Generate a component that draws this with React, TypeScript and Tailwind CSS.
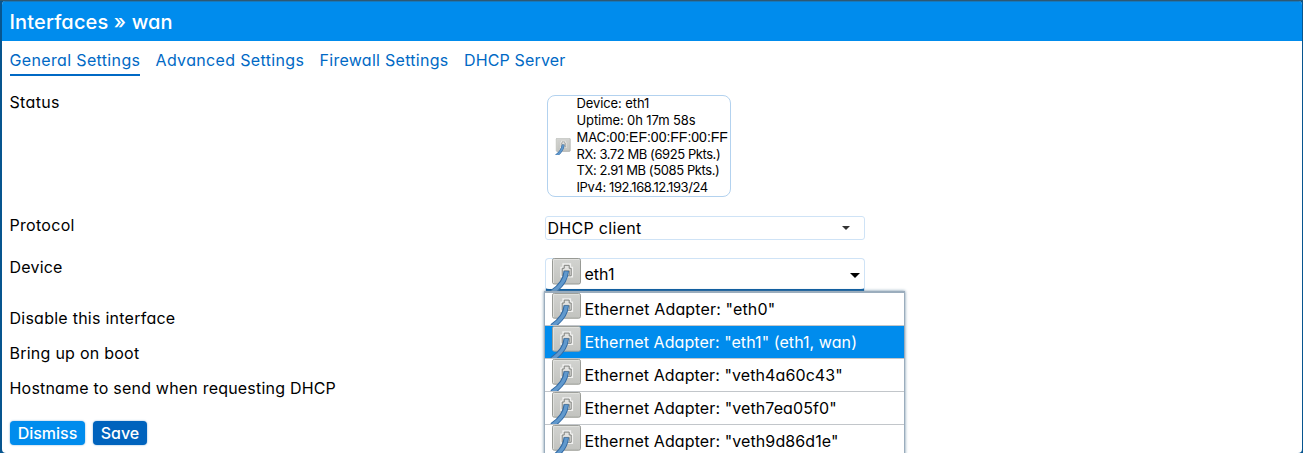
import React from "react";

function PortIcon({ className }: { className: string }) {
  return (
    <svg viewBox="0 0 32 33" className={className} preserveAspectRatio="none">
      <defs>
        <linearGradient id="plate" x1="0" y1="0" x2="0" y2="1">
          <stop offset="0" stopColor="#d2d3d0" />
          <stop offset="1" stopColor="#c2c3bf" />
        </linearGradient>
      </defs>
      <rect x="2.5" y="0.5" width="28" height="25.5" rx="1.8" fill="url(#plate)" stroke="#989a95" />
      <path d="M3.5 25V1.5H29.5" fill="none" stroke="#e4e5e2" strokeWidth="0.8" />
      <path d="M11.3 18.5V9.8h2V6.3h6.8v3.5h2v8.7z" fill="#e9e9e7" stroke="#f0f0ef" strokeWidth="2" />
      <path d="M12.2 17.8V10.3h2V7.3h5v3h2v7.5z" fill="#e3e3e1" stroke="#7d7f7b" strokeWidth="1" />
      <path d="M14.3 17v-4.2h5V17" fill="none" stroke="#858783" />
      <path d="M16.3 12.8C15.8 20.5 10.5 28.5 2 34.5" fill="none" stroke="#3169a3" strokeWidth="5.4" />
      <path d="M16.3 13.3C15.8 20.7 10.5 28.5 2 34.5" fill="none" stroke="#6199cd" strokeWidth="3.4" />
    </svg>
  );
}

function Row({ label, className, labelClass, children }: { label: string; className: string; labelClass: string; children?: React.ReactNode }) {
  return (
    <div className={`flex items-start ${className}`}>
      <div className="-mt-px w-[535px] shrink-0 leading-5"><span className={labelClass}>{label}</span></div>
      {children}
    </div>
  );
}

const options = [
  { text: 'Ethernet Adapter: "eth0"', active: false, spacing: "tracking-[0.15px]" },
  { text: 'Ethernet Adapter: "eth1" (eth1, wan)', active: true, spacing: "tracking-[0.07px]" },
  { text: 'Ethernet Adapter: "veth4a60c43"', active: false, spacing: "tracking-[0.09px]" },
  { text: 'Ethernet Adapter: "veth7ea05f0"', active: false, spacing: "tracking-[0.1px]" },
  { text: 'Ethernet Adapter: "veth9d86d1e"', active: false, spacing: "tracking-[0.1px]" },
];

const details = [
  ["Device: eth1", "tracking-[-0.1px]"],
  ["Uptime: 0h 17m 58s", "tracking-[-0.1px]"],
  ["MAC:", "tracking-[-0.1px]"],
  ["RX: 3.72 MB (6925 Pkts.)", "tracking-[-0.43px]"],
  ["TX: 2.91 MB (5085 Pkts.)", "tracking-[-0.4px]"],
  ["IPv4: 192.168.12.193/24", "tracking-[-0.4px]"],
];

export default function App() {
  return (
    <div className="h-[453px] w-[1303px] overflow-hidden bg-[#07558f] pt-px pr-px pl-[2px] font-['Inter',sans-serif] text-[16px] text-black [font-feature-settings:'cv11'] [box-shadow:inset_0_1px_0_#2d5873]">
      <div className="h-[452px] overflow-hidden rounded-[4px] bg-white">
        <header className="flex h-10 items-center border-t border-[#1978b9] bg-[#008ced] pl-[7.5px] text-[20px] font-medium text-white">
          <span className="tracking-[0.15px]">Interfaces » wan</span>
        </header>
        <nav className="flex h-[35px] gap-4 pl-2 text-[#0069c5]">
          <span className="h-[35px] w-[130px] border-b-2 border-[#0069c5] pt-[7px] leading-6 whitespace-nowrap tracking-[0.35px]"><span className="-ml-[0.5px]">General Settings</span></span>
          <span className="w-[148px] pt-[7px] leading-6 whitespace-nowrap tracking-[0.35px]"><span className="-ml-[0.5px]">Advanced Settings</span></span>
          <span className="w-[128.5px] pt-[7px] leading-6 whitespace-nowrap tracking-[0.28px]"><span className="-ml-[0.5px]">Firewall Settings</span></span>
          <span className="pt-[7px] leading-6 whitespace-nowrap tracking-[0.15px]"><span className="-ml-[0.5px]">DHCP Server</span></span>
        </nav>
        <main className="pl-2">
          <Row label="Status" className="h-[123px] pt-[17px]" labelClass="-ml-[0.5px] tracking-[0.35px]">
            <div className="mt-[2px] ml-[2px] flex h-[102px] w-[184px] items-center rounded-[8px] border border-[#b3d2ef] pl-[6.5px]">
              <PortIcon className="mr-[6px] h-[17px] w-4" />
              <div className="-mt-[0.8px] text-[13px] leading-[16.8px] whitespace-nowrap">
                {details.map(([text, spacing]) => (
                  <div key={text} className={`flex h-[16.8px] ${spacing}`}>
                    <span>{text}</span>
                    {text === "MAC:" && <span className="font-['Liberation_Sans',sans-serif] text-[14px] tracking-normal">00:EF:00:FF:00:FF</span>}
                  </div>
                ))}
              </div>
            </div>
          </Row>
          <Row label="Protocol" className="h-[42px] pt-[17px]" labelClass="-ml-[0.5px] tracking-[0.3px]">
            <div className="flex h-[24px] w-[320px] items-center justify-between rounded-[3px] border border-[#cfe3f6] pr-[14px] pl-[1.5px]">
              <span className="tracking-[0.3px]">DHCP client</span>
              <svg className="h-1 w-2" viewBox="0 0 8 4"><path d="M0 0h8L4 4z" fill="#333" /></svg>
            </div>
          </Row>
          <Row label="Device" className="h-[51px] pt-[17px]" labelClass="-ml-[0.5px] tracking-[0.2px]">
            <div className="relative h-[34px] w-[320px]">
              <div className="flex h-[34px] items-start rounded-[4px] border border-b-[3px] border-[#cfe3f6] border-b-[#00569f] pr-[4px] pl-[4px]">
                <PortIcon className="-mt-px h-[33px] w-8 shrink-0" />
                <span className="ml-[2.5px] leading-[31px]">eth1</span>
                <svg className="mt-[14px] ml-auto h-[5px] w-[10px]" viewBox="0 0 10 5"><path d="M0 0h10L5 5z" fill="#000" /></svg>
              </div>
              <ul className="absolute top-[33px] left-[-1px] z-10 w-[361px] border border-t-2 border-[#9badbd] bg-white shadow-[0_0_3px_#6d8ca4]">
                {options.map(({ text, active, spacing }) => (
                  <li key={text} className={active ? "flex h-[33px] items-start border-b border-[#c2c6ca] bg-[#008ced] pl-[5px] text-white" : "flex h-[33px] items-start border-b border-[#c2c6ca] bg-white pl-[5px]"}>
                    <PortIcon className="h-8 w-8 shrink-0" />
                    <span className={`ml-[2.5px] leading-[33px] whitespace-nowrap ${spacing}`}>{text}</span>
                  </li>
                ))}
              </ul>
            </div>
          </Row>
          <Row label="Disable this interface" className="h-[35px] pt-[17px]" labelClass="-ml-[0.5px] tracking-[0.25px]" />
          <Row label="Bring up on boot" className="h-[35px] pt-[17px]" labelClass="-ml-[0.5px] tracking-[0.25px]" />
          <Row label="Hostname to send when requesting DHCP" className="h-[58px] pt-[17px]" labelClass="-ml-[0.5px] whitespace-nowrap tracking-[0.2px]" />
          <div className="mt-px flex gap-2 font-medium text-white">
            <button className="h-[24px] w-[75px] rounded-[4px] bg-[#008ced] leading-[24px] shadow-[0_0_2px_#7aa9d0]">Dismiss</button>
            <button className="h-[24px] w-[54px] rounded-[4px] bg-[#0063bd] leading-[24px] shadow-[0_0_2px_#7aa9d0]">Save</button>
          </div>
        </main>
      </div>
    </div>
  );
}
